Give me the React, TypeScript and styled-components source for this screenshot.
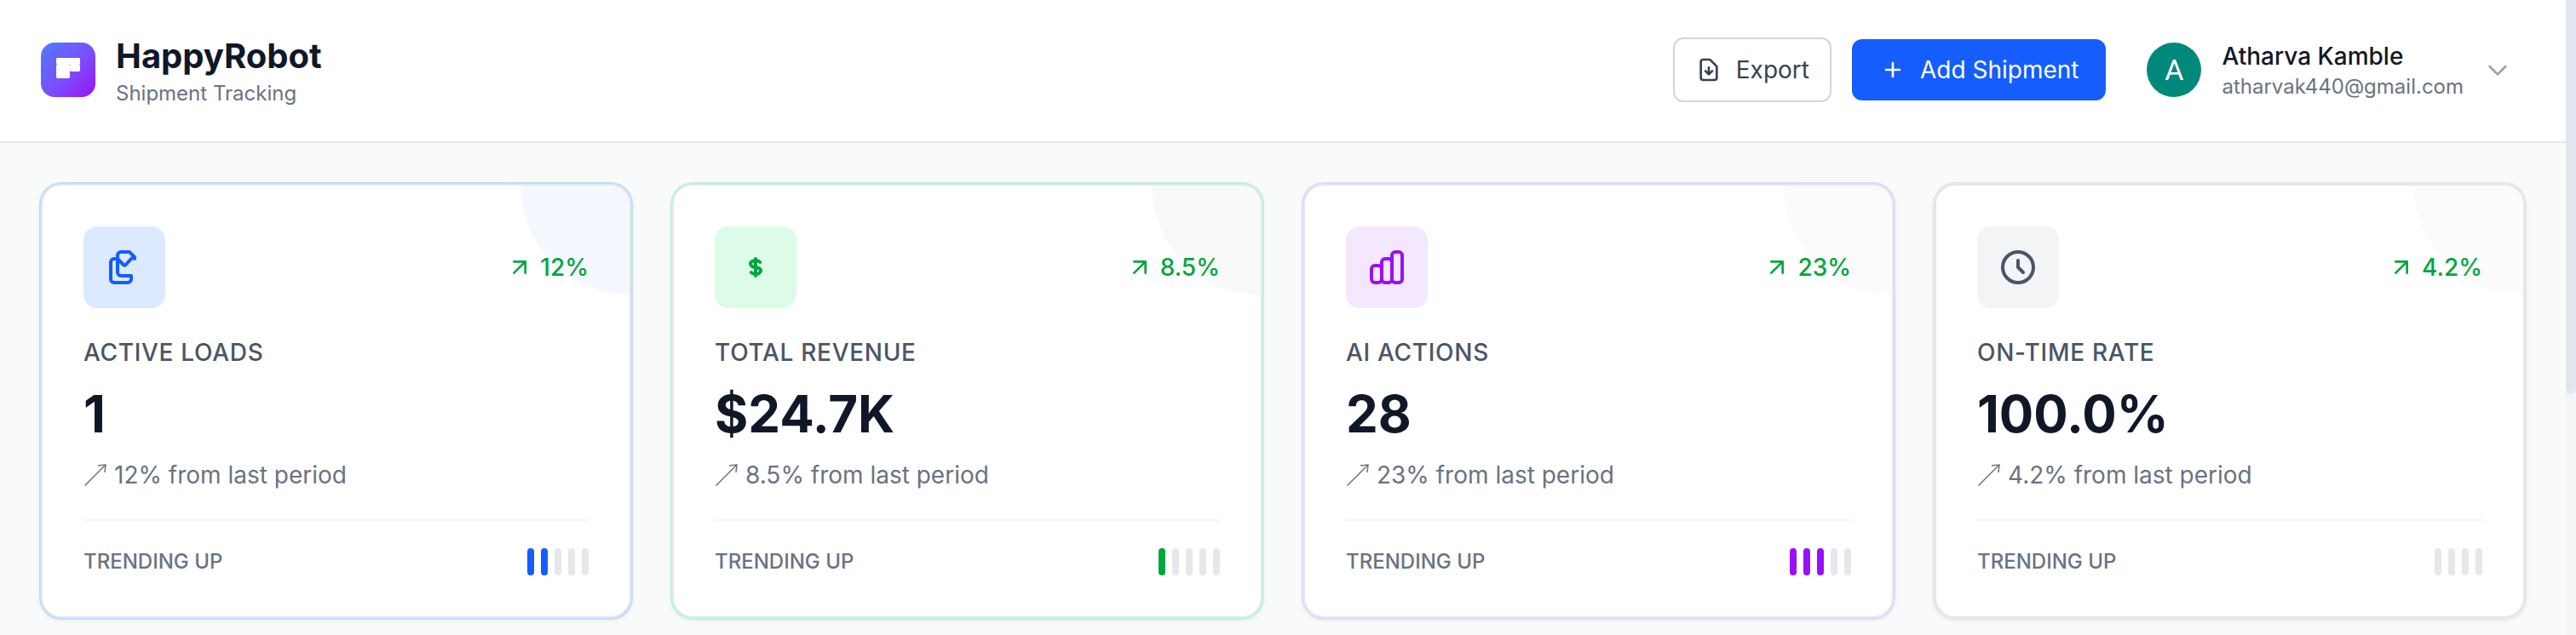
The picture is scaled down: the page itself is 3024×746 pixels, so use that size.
import React from "react";
import styled, { createGlobalStyle } from "styled-components";

const GlobalStyle = createGlobalStyle`
  *, *::before, *::after { box-sizing: border-box; }
  body { margin: 0; font-family: Inter, "Liberation Sans", sans-serif; color: #101828; background: #f9fafb; }
  h1, h2, p { margin: 0; }
  button { font: inherit; cursor: pointer; }
`;

const Shell = styled.div`
  display: flex;
  height: 100vh;
  overflow: hidden;
`;

const Page = styled.div`
  flex: 1;
  min-width: 0;
  background: #f9fbfa;
`;

const ScrollTrack = styled.div`
  width: 12px;
  background: #f3f4f8;
`;

const ScrollThumb = styled.div`
  height: 62%;
  background: #e2e6ef;
  border-radius: 0 0 6px 6px;
`;

const Header = styled.header`
  display: flex;
  align-items: center;
  justify-content: space-between;
  padding: 38px 48px 40px;
  background: #ffffff;
  border-bottom: 2px solid #e5e7eb;
`;

const Brand = styled.div`
  display: flex;
  align-items: center;
  gap: 24px;
`;

const Logo = styled.div`
  display: grid;
  place-items: center;
  width: 64px;
  height: 64px;
  border-radius: 16px;
  background: linear-gradient(135deg, #4f7bff 0%, #7c4dff 55%, #9810fa 100%);
`;

const Title = styled.h1`
  font-size: 40px;
  line-height: 56px;
  font-weight: 700;
`;

const Caption = styled.p`
  font-size: 24px;
  line-height: 32px;
  color: #6a7282;
`;

const Actions = styled.div`
  display: flex;
  align-items: center;
  gap: 24px;
`;

const Button = styled.button<{ $primary?: boolean }>`
  display: flex;
  align-items: center;
  gap: 16px;
  padding: ${(p) => (p.$primary ? "16px 32px" : "16px 24px")};
  border: ${(p) => (p.$primary ? "none" : "2px solid #d1d5dc")};
  border-radius: 12px;
  background: ${(p) => (p.$primary ? "#155dfc" : "#ffffff")};
  color: ${(p) => (p.$primary ? "#ffffff" : "#364153")};
  font-size: 28px;
  line-height: 40px;
`;

const UserButton = styled.button`
  display: flex;
  align-items: center;
  gap: 24px;
  margin-left: 8px;
  padding: 0 16px;
  border: none;
  background: transparent;
  color: #99a1af;
  text-align: left;
`;

const Avatar = styled.span`
  display: grid;
  place-items: center;
  width: 64px;
  height: 64px;
  border-radius: 50%;
  background: #00897b;
  color: #ffffff;
  font-family: Roboto, sans-serif;
  font-size: 34px;
  line-height: 40px;
`;

const UserText = styled.span`
  display: flex;
  flex-direction: column;
`;

const UserName = styled.span`
  font-size: 28px;
  line-height: 40px;
  font-weight: 500;
  color: #101828;
`;

const UserEmail = styled.span`
  font-size: 24px;
  line-height: 32px;
  color: #6a7282;
`;

const Grid = styled.main`
  display: grid;
  grid-template-columns: repeat(4, minmax(0, 1fr));
  gap: 48px;
  padding: 48px;
`;

const Card = styled.section<{ $ring: string }>`
  position: relative;
  overflow: hidden;
  padding: 48px;
  border: 2px solid #e5e7eb;
  border-radius: 24px;
  background: #ffffff;
  box-shadow: 0 0 0 2px ${(p) => p.$ring}, 0 2px 6px rgba(0, 0, 0, 0.1);
`;

const Glow = styled.div<{ $color: string }>`
  position: absolute;
  top: -128px;
  right: -128px;
  width: 256px;
  height: 256px;
  border-radius: 50%;
  background: ${(p) => p.$color};
`;

const CardBody = styled.div`
  position: relative;
`;

const CardTop = styled.div`
  display: flex;
  align-items: center;
  justify-content: space-between;
  margin-bottom: 32px;
`;

const IconTile = styled.div<{ $bg: string; $fg: string }>`
  display: grid;
  place-items: center;
  width: 96px;
  height: 96px;
  border-radius: 16px;
  background: ${(p) => p.$bg};
  color: ${(p) => p.$fg};
`;

const Change = styled.div`
  display: flex;
  align-items: center;
  gap: 8px;
  font-size: 28px;
  line-height: 40px;
  font-weight: 500;
  color: #00a63e;
`;

const Label = styled.h2`
  margin-bottom: 16px;
  font-size: 28px;
  line-height: 40px;
  font-weight: 500;
  letter-spacing: 0.025em;
  text-transform: uppercase;
  color: #4a5565;
`;

const Value = styled.p`
  margin-bottom: 16px;
  font-size: 60px;
  line-height: 72px;
  font-weight: 700;
`;

const Detail = styled.p`
  display: flex;
  align-items: center;
  gap: 8px;
  font-size: 28px;
  line-height: 40px;
  color: #6a7282;
`;

const CardFooter = styled.div`
  display: flex;
  align-items: center;
  justify-content: space-between;
  margin-top: 32px;
  padding-top: 32px;
  border-top: 2px solid #f3f4f6;
  font-size: 24px;
  line-height: 32px;
  font-weight: 500;
  color: #6a7282;
`;

const Bars = styled.div`
  display: flex;
  gap: 8px;
`;

const Bar = styled.span<{ $color: string }>`
  width: 8px;
  height: 32px;
  border-radius: 4px;
  background: ${(p) => p.$color};
`;

function Icon({ path, size }: { path: string; size: number }) {
  return (
    <svg
      width={size}
      height={size}
      viewBox="0 0 24 24"
      fill="none"
      stroke="currentColor"
      strokeWidth={2}
      strokeLinecap="round"
      strokeLinejoin="round"
      aria-hidden="true"
    >
      <path d={path} />
    </svg>
  );
}

const icons = {
  download:
    "M12 10v6m0 0l-3-3m3 3l3-3m2 8H7a2 2 0 01-2-2V5a2 2 0 012-2h5.586a1 1 0 01.707.293l5.414 5.414a1 1 0 01.293.707V19a2 2 0 01-2 2z",
  plus: "M12 6v6m0 0v6m0-6h6m-6 0H6",
  chevron: "M19 9l-7 7-7-7",
  trend: "M7 17L17 7M17 7H7M17 7V17",
  loads:
    "M8 7v8a2 2 0 002 2h6M8 7V5a2 2 0 012-2h4.586a1 1 0 01.707.293l2.414 2.414a1 1 0 01.293.707V7M8 7H6a2 2 0 00-2 2v10a2 2 0 002 2h8a2 2 0 002-2v-2M8 7l3.4 3.5a1 1 0 001.4 0L16.2 6.8",
  dollar:
    "M12 8c-1.657 0-3 .895-3 2s1.343 2 3 2 3 .895 3 2-1.343 2-3 2m0-8c1.11 0 2.08.402 2.599 1M12 8V7m0 1v8m0 0v1m0-1c-1.11 0-2.08-.402-2.599-1",
  chart:
    "M9 19v-6a2 2 0 00-2-2H5a2 2 0 00-2 2v6a2 2 0 002 2h2a2 2 0 002-2zm0 0V9a2 2 0 012-2h2a2 2 0 012 2v10m-6 0a2 2 0 002 2h2a2 2 0 002-2m0 0V5a2 2 0 012-2h2a2 2 0 012 2v14a2 2 0 01-2 2h-2a2 2 0 01-2-2z",
  clock: "M12 8v4l3 3m6-3a9 9 0 11-18 0 9 9 0 0118 0z",
};

interface Stat {
  label: string;
  value: string;
  change: string;
  icon: string;
  bg: string;
  fg: string;
  ring: string;
  glow: string;
  filled: number;
  bars: number;
}

const stats: Stat[] = [
  { label: "Active Loads", value: "1", change: "12%", icon: icons.loads, bg: "#dbeafe", fg: "#155dfc", ring: "#bedbff", glow: "#f5f8ff", filled: 2, bars: 5 },
  { label: "Total Revenue", value: "$24.7K", change: "8.5%", icon: icons.dollar, bg: "#dcfce7", fg: "#00a63e", ring: "#b9f8cf", glow: "#f8faf9", filled: 1, bars: 5 },
  { label: "AI Actions", value: "28", change: "23%", icon: icons.chart, bg: "#f3e8ff", fg: "#9810fa", ring: "#e9d4ff", glow: "#fbfafd", filled: 3, bars: 5 },
  { label: "On-Time Rate", value: "100.0%", change: "4.2%", icon: icons.clock, bg: "#f3f4f6", fg: "#4a5565", ring: "#e5e7eb", glow: "#fbfbfc", filled: 0, bars: 4 },
];

function StatCard({ stat }: { stat: Stat }) {
  return (
    <Card $ring={stat.ring}>
      <Glow $color={stat.glow} />
      <CardBody>
        <CardTop>
          <IconTile $bg={stat.bg} $fg={stat.fg}>
            <Icon path={stat.icon} size={48} />
          </IconTile>
          <Change>
            <Icon path={icons.trend} size={32} />
            {stat.change}
          </Change>
        </CardTop>
        <Label>{stat.label}</Label>
        <Value>{stat.value}</Value>
        <Detail>
          <svg width="28" height="28" viewBox="0 0 28 28" fill="none" stroke="currentColor" strokeWidth="1.5" aria-hidden="true">
            <path d="M1.5 26.5L25.5 2.5M17 3L26 2L25 11" />
          </svg>
          {stat.change} from last period
        </Detail>
        <CardFooter>
          <span>TRENDING UP</span>
          <Bars>
            {Array.from({ length: stat.bars }, (_, i) => (
              <Bar key={i} $color={i < stat.filled ? stat.fg : "#e5e7eb"} />
            ))}
          </Bars>
        </CardFooter>
      </CardBody>
    </Card>
  );
}

export default function App() {
  return (
    <Shell>
      <GlobalStyle />
      <Page>
        <Header>
          <Brand>
            <Logo>
              <svg width="32" height="32" viewBox="0 0 32 32" fill="#ffffff" aria-hidden="true">
                <rect x="2" y="2" width="28" height="8" rx="1.4" />
                <rect x="2" y="10" width="16" height="16" rx="1.4" />
                <rect x="18" y="10" width="12" height="8" rx="1.4" />
                <path d="M4 9h10v2H4zM19.500 9H28v2h-8.500zM17 11.500h2V16h-2z" />
              </svg>
            </Logo>
            <div>
              <Title>HappyRobot</Title>
              <Caption>Shipment Tracking</Caption>
            </div>
          </Brand>
          <Actions>
            <Button type="button">
              <Icon path={icons.download} size={32} />
              Export
            </Button>
            <Button type="button" $primary>
              <Icon path={icons.plus} size={32} />
              Add Shipment
            </Button>
            <UserButton type="button">
              <Avatar>A</Avatar>
              <UserText>
                <UserName>Atharva Kamble</UserName>
                <UserEmail>atharvak440@gmail.com</UserEmail>
              </UserText>
              <Icon path={icons.chevron} size={32} />
            </UserButton>
          </Actions>
        </Header>
        <Grid>
          {stats.map((stat) => (
            <StatCard key={stat.label} stat={stat} />
          ))}
        </Grid>
      </Page>
      <ScrollTrack>
        <ScrollThumb />
      </ScrollTrack>
    </Shell>
  );
}
